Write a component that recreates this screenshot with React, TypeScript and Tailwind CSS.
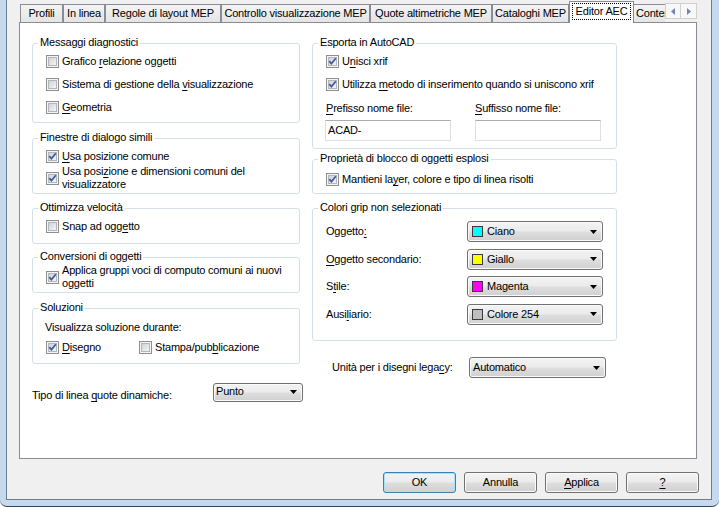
import React from "react";

function U({ children }: { children: React.ReactNode }) {
  return <span className="underline decoration-1 underline-offset-[2px]">{children}</span>;
}

function CheckBox({ checked = false }: { checked?: boolean }) {
  return (
    <svg width="13" height="13" viewBox="0 0 13 13" className="block shrink-0">
      <defs>
        <linearGradient id="cbfill" x1="0" y1="0" x2="1" y2="1">
          <stop offset="0" stopColor="#cdd0d5" />
          <stop offset="1" stopColor="#f7f7f7" />
        </linearGradient>
      </defs>
      <rect x="0.5" y="0.5" width="12" height="12" fill="#f4f4f4" stroke="#8e8f8f" />
      <rect x="2.5" y="2.5" width="8" height="8" fill="url(#cbfill)" stroke="#b3b7bd" />
      {checked && (
        <path d="M3.3 6.2 L5.4 8.7 L9.8 3.3" fill="none" stroke="#3c5b9e" strokeWidth="1.8" />
      )}
    </svg>
  );
}

function CheckRow({
  checked,
  children,
  className = "",
}: {
  checked?: boolean;
  children: React.ReactNode;
  className?: string;
}) {
  return (
    <div className={`flex items-center ${className}`}>
      <CheckBox checked={checked} />
      <span className="ml-[3px] whitespace-nowrap leading-[13px]">{children}</span>
    </div>
  );
}

function Group({
  title,
  className = "",
  children,
}: {
  title: string;
  className?: string;
  children?: React.ReactNode;
}) {
  return (
    <div className={`relative shrink-0 rounded-[3px] border border-[#d5dfe5] ${className}`}>
      <span className="absolute left-[5px] top-[-8px] whitespace-nowrap bg-white px-[2px] leading-[13px]">
        {title}
      </span>
      {children}
    </div>
  );
}

function Combo({
  label,
  swatch,
  className = "",
  pad = "pl-[2px]",
}: {
  label: string;
  swatch?: string;
  className?: string;
  pad?: string;
}) {
  return (
    <div
      className={`flex shrink-0 items-center rounded-[3px] border border-[#707070] bg-[linear-gradient(to_bottom,#f3f3f3_0%,#ebebeb_48%,#dedede_52%,#d0d0d0_100%)] pr-[5px] shadow-[inset_0_0_0_1px_#fbfbfb] ${pad} ${className}`}
    >
      {swatch && <span className={`mr-[4px] h-[11px] w-[11px] shrink-0 border border-[#3a3a3a] ${swatch}`} />}
      <span className="flex-1 whitespace-nowrap leading-[13px]">{label}</span>
      <svg width="7" height="4" viewBox="0 0 7 4" className="block shrink-0">
        <path d="M0 0H7L3.5 4Z" fill="#000" />
      </svg>
    </div>
  );
}

function Btn({ children, def = false }: { children: React.ReactNode; def?: boolean }) {
  return (
    <div
      className={`flex h-[21px] w-[73px] items-center justify-center rounded-[3px] border bg-[linear-gradient(to_bottom,#f3f3f3_0%,#ebebeb_48%,#dedede_52%,#d0d0d0_100%)] leading-[13px] ${
        def
          ? "border-[#3c7fb1] shadow-[inset_0_0_0_1px_#a9e2f6]"
          : "border-[#707070] shadow-[inset_0_0_0_1px_#fbfbfb]"
      }`}
    >
      {children}
    </div>
  );
}

function Tab({ label, w }: { label: string; w: string }) {
  return (
    <div
      className={`mb-[1px] flex h-[18px] shrink-0 items-center justify-center overflow-hidden whitespace-nowrap border-x border-t border-[#898c95] bg-[linear-gradient(to_bottom,#f4f4f4,#e4e4e4)] leading-[13px] ${w}`}
    >
      {label}
    </div>
  );
}

export default function App() {
  return (
    <div className="h-[507px] w-[719px] overflow-hidden bg-white font-['Liberation_Sans',Arial,sans-serif] text-[11px] leading-[13px] tracking-[-0.2px] text-black">
      <div className="h-[507px] rounded-b-[7px] border-b border-[#3a4350] bg-[#c5d9ef] pl-[6px] pr-[7px]">
        <div className="flex h-[500px] flex-col border-x border-b border-[#707d8d] bg-[#f0f0f0] pl-[12px] pr-[12px]">
          {/* Tab strip */}
          <div className="flex h-[23px] shrink-0 pl-[1px]">
            <div className="flex h-[23px] w-[645px] items-end overflow-hidden">
              <Tab label="Profili" w="w-[43px]" />
              <Tab label="In linea" w="w-[42px]" />
              <Tab label="Regole di layout MEP" w="w-[116px]" />
              <Tab label="Controllo visualizzazione MEP" w="w-[149px]" />
              <Tab label="Quote altimetriche MEP" w="w-[122px]" />
              <Tab label="Cataloghi MEP" w="w-[77px]" />
              <div className="relative z-10 flex h-[22px] w-[65px] shrink-0 items-start justify-center border-x border-t border-[#898c95] bg-white pt-[1px]">
                <span className="h-[17px] whitespace-nowrap border border-dotted border-black px-[3px] leading-[15px]">
                  Editor AEC
                </span>
              </div>
              <div className="mb-[1px] flex h-[18px] w-[60px] shrink-0 items-center overflow-hidden whitespace-nowrap border-t border-r border-[#898c95] bg-[linear-gradient(to_bottom,#f4f4f4,#e4e4e4)] pl-[2px] leading-[13px]">
                Contenuto
              </div>
            </div>
            <div className="mt-[3px] flex h-[16px] self-start">
              <div className="flex h-[16px] w-[16px] items-center justify-center border border-[#d0d0d0] bg-[#f8f8f8]">
                <svg width="4" height="7" viewBox="0 0 4 7" className="block">
                  <path d="M4 0V7L0 3.5Z" fill="#6c86b6" />
                </svg>
              </div>
              <div className="flex h-[16px] w-[16px] items-center justify-center border border-l-0 border-[#d0d0d0] bg-[#f8f8f8]">
                <svg width="4" height="7" viewBox="0 0 4 7" className="block">
                  <path d="M0 0V7L4 3.5Z" fill="#6c86b6" />
                </svg>
              </div>
            </div>
          </div>

          {/* Panel */}
          <div className="-mt-[1px] flex h-[437px] w-[678px] shrink-0 border border-[#898c95] bg-white pl-[12px] pt-[20px]">
            {/* Left column */}
            <div className="flex w-[271px] shrink-0 flex-col">
              <Group title="Messaggi diagnostici" className="h-[80px] w-[268px]">
                <div className="flex flex-col pl-[13px] pt-[6px]">
                  <CheckRow className="h-[23px]">
                    Grafico <U>r</U>elazione oggetti
                  </CheckRow>
                  <CheckRow className="h-[23px]">
                    Sistema di gestione della <U>v</U>isualizzazione
                  </CheckRow>
                  <CheckRow className="h-[23px]">
                    <U>G</U>eometria
                  </CheckRow>
                </div>
              </Group>

              <Group title="Finestre di dialogo simili" className="mt-[15px] h-[56px] w-[268px]">
                <div className="flex flex-col pl-[13px] pt-[9px]">
                  <CheckRow checked className="h-[17px]">
                    <U>U</U>sa posizione comune
                  </CheckRow>
                  <CheckRow checked className="h-[26px]">
                    Usa posi<U>z</U>ione e dimensioni comuni del
                    <br />
                    visualizzatore
                  </CheckRow>
                </div>
              </Group>

              <Group title="Ottimizza velocità" className="mt-[14px] h-[36px] w-[268px]">
                <div className="flex flex-col pl-[13px] pt-[9px]">
                  <CheckRow className="h-[17px]">
                    Snap ad ogg<U>e</U>tto
                  </CheckRow>
                </div>
              </Group>

              <Group title="Conversioni di oggetti" className="mt-[13px] h-[36px] w-[268px]">
                <div className="flex flex-col pl-[13px] pt-[6px]">
                  <CheckRow checked className="h-[26px]">
                    Applica gruppi voci di computo comuni ai nuovi
                    <br />
                    oggetti
                  </CheckRow>
                </div>
              </Group>

              <Group title="Soluzioni" className="mt-[15px] h-[56px] w-[268px]">
                <div className="flex flex-col pt-[8px]">
                  <div className="flex h-[20px] items-center pl-[12px]">Visualizza soluzione durante:</div>
                  <div className="flex h-[20px] items-center pl-[13px]">
                    <CheckRow checked className="w-[93px]">
                      <U>D</U>isegno
                    </CheckRow>
                    <CheckRow>
                      Stampa/pub<U>b</U>licazione
                    </CheckRow>
                  </div>
                </div>
              </Group>

              <div className="mt-[19px] flex">
                <div className="w-[181px] shrink-0 whitespace-nowrap pt-[6px]">
                  Tipo di linea <U>q</U>uote dinamiche:
                </div>
                <Combo label="Punto" className="h-[19px] w-[90px] pb-[2px]" />
              </div>
            </div>

            {/* Right column */}
            <div className="ml-[9px] flex w-[305px] shrink-0 flex-col">
              <Group title="Esporta in AutoCAD" className="h-[106px] w-[305px]">
                <div className="flex flex-col pt-[6px]">
                  <CheckRow checked className="h-[23px] pl-[13px]">
                    U<U>n</U>isci xrif
                  </CheckRow>
                  <CheckRow checked className="h-[23px] pl-[13px]">
                    Utilizza <U>m</U>etodo di inserimento quando si uniscono xrif
                  </CheckRow>
                  <div className="flex h-[24px] items-center pl-[13px]">
                    <span className="w-[149px] shrink-0">
                      <U>P</U>refisso nome file:
                    </span>
                    <span>
                      <U>S</U>uffisso nome file:
                    </span>
                  </div>
                  <div className="flex gap-[24px] pl-[12px]">
                    <div className="flex h-[21px] w-[126px] items-center border border-[#dbdfe6] border-t-[#abadb3] bg-white pl-[2px]">
                      ACAD-
                    </div>
                    <div className="h-[21px] w-[126px] border border-[#dbdfe6] border-t-[#abadb3] bg-white" />
                  </div>
                </div>
              </Group>

              <Group title="Proprietà di blocco di oggetti esplosi" className="mt-[10px] h-[35px] w-[305px]">
                <div className="flex flex-col pl-[13px] pt-[11px]">
                  <CheckRow checked className="h-[17px]">
                    Mantieni la<U>y</U>er, colore e tipo di linea risolti
                  </CheckRow>
                </div>
              </Group>

              <Group title="Colori grip non selezionati" className="mt-[14px] h-[133px] w-[305px]">
                <div className="flex flex-col gap-[6.67px] pt-[12px]">
                  <div className="flex h-[21px] items-center">
                    <span className="w-[154px] shrink-0 pl-[13px]">
                      Oggetto<U>:</U>
                    </span>
                    <Combo label="Ciano" swatch="bg-[#00ffff]" pad="pl-[4px]" className="h-[21px] w-[136px]" />
                  </div>
                  <div className="flex h-[21px] items-center">
                    <span className="w-[154px] shrink-0 pl-[13px]">
                      <U>O</U>ggetto secondario:
                    </span>
                    <Combo label="Giallo" swatch="bg-[#ffff00]" pad="pl-[4px]" className="h-[21px] w-[136px]" />
                  </div>
                  <div className="flex h-[21px] items-center">
                    <span className="w-[154px] shrink-0 pl-[13px]">
                      S<U>t</U>ile:
                    </span>
                    <Combo label="Magenta" swatch="bg-[#ff00ff]" pad="pl-[4px]" className="h-[21px] w-[136px]" />
                  </div>
                  <div className="flex h-[21px] items-center">
                    <span className="w-[154px] shrink-0 pl-[13px]">
                      Ausi<U>l</U>iario:
                    </span>
                    <Combo label="Colore 254" swatch="bg-[#bebebe]" pad="pl-[4px]" className="h-[21px] w-[136px]" />
                  </div>
                </div>
              </Group>

              <div className="mt-[16px] flex h-[21px] items-center">
                <span className="w-[157px] shrink-0 pl-[20px]">
                  Unità per i disegni lega<U>c</U>y:
                </span>
                <Combo label="Automatico" pad="pl-[3px]" className="h-[21px] w-[137px]" />
              </div>
            </div>
          </div>

          {/* Buttons */}
          <div className="mt-[13px] flex justify-end gap-[8px]">
            <Btn def>OK</Btn>
            <Btn>Annulla</Btn>
            <Btn>
              <U>A</U>pplica
            </Btn>
            <Btn>
              <U>?</U>
            </Btn>
          </div>
        </div>
      </div>
    </div>
  );
}
